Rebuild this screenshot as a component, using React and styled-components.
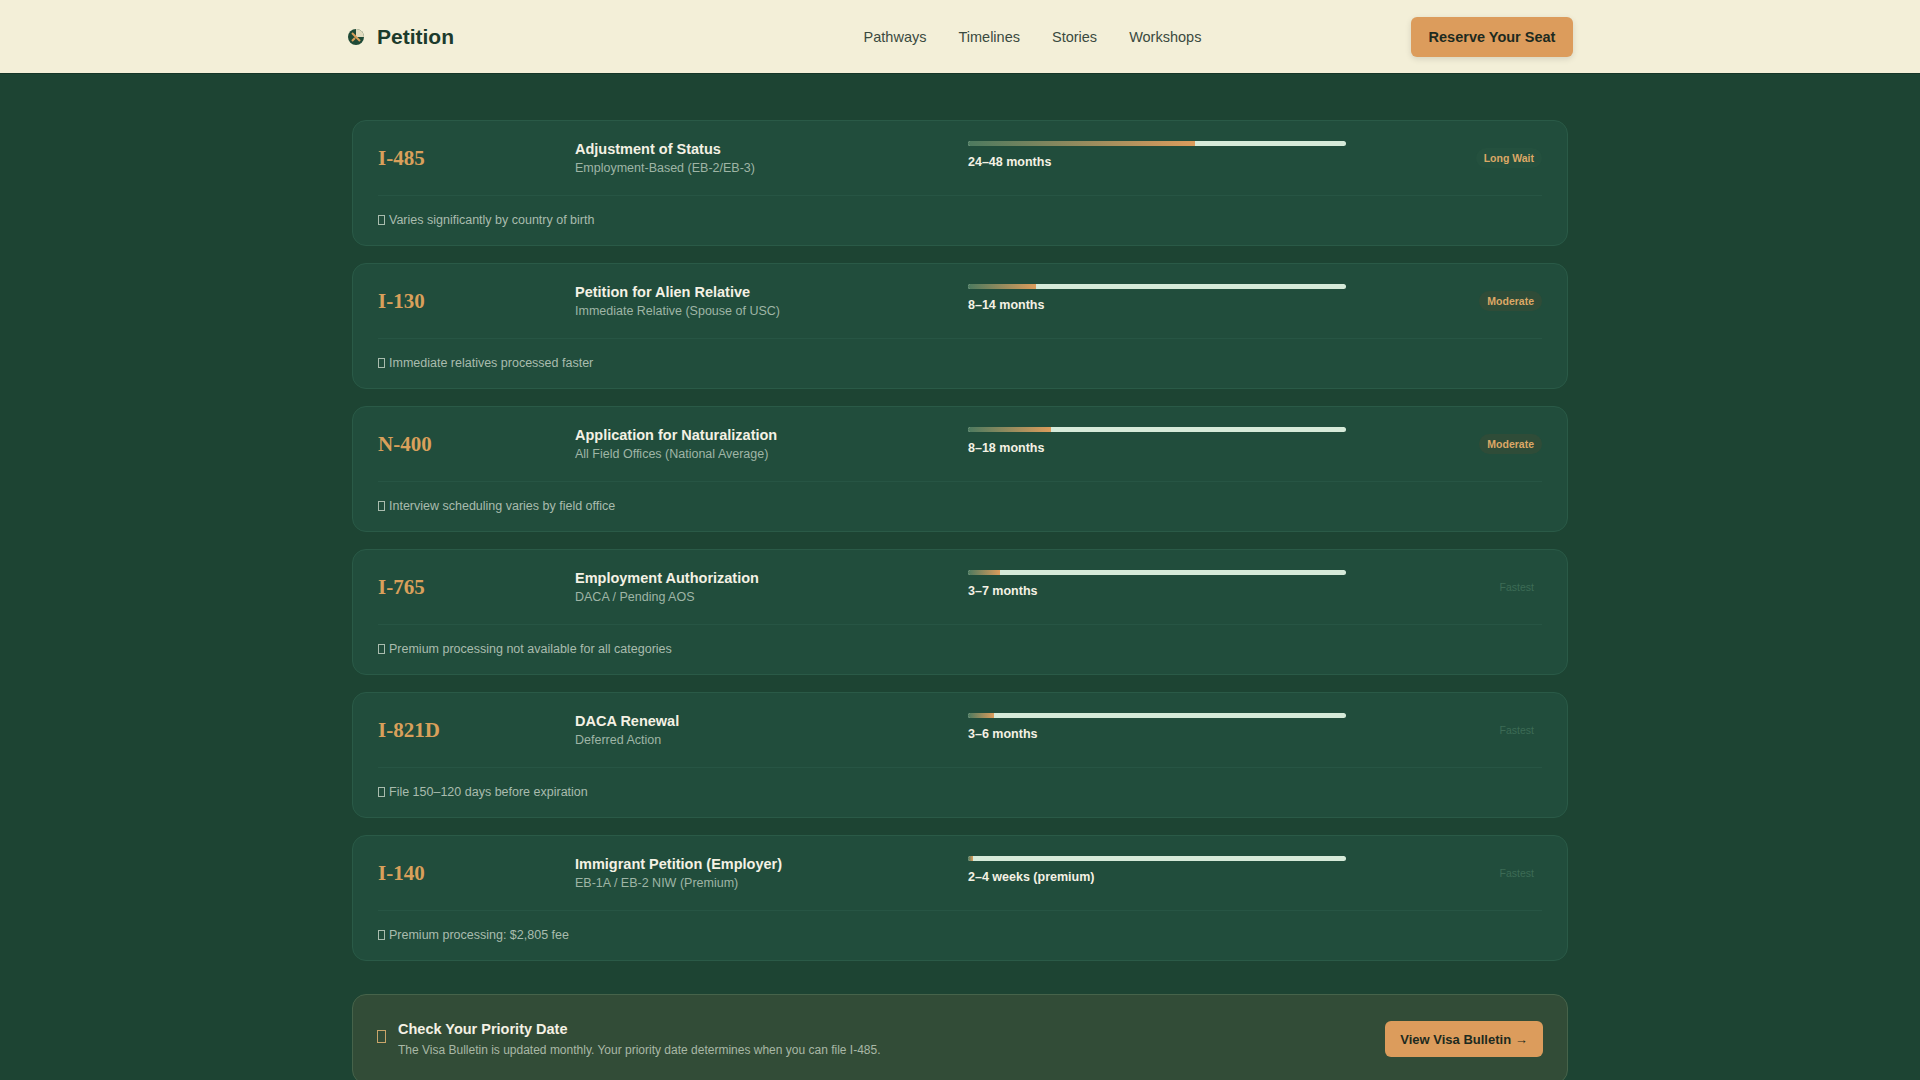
import React from "react";
import styled, { createGlobalStyle } from "styled-components";

const Global = createGlobalStyle`
  body { margin: 0; background: #1d4433; font-family: "Liberation Sans", Arial, sans-serif; }
`;

const Header = styled.header`
  height: 73px; background: #f3efd8; border-bottom: 1px solid #163628;
  display: flex; justify-content: center;
`;
const HeaderInner = styled.div`
  width: 1226px; display: flex; align-items: center; justify-content: space-between;
`;
const Brand = styled.div`
  display: flex; align-items: center; gap: 12px; font-size: 21px; font-weight: 700; color: #1c3b2c;
`;
const Nav = styled.nav`
  display: flex; gap: 32px; margin-left: 200px; font-size: 14.5px; color: #3a4a40;
`;
const CTA = styled.button`
  background: #dc9c5c; color: #1d2a20; border: 0; border-radius: 6px;
  font: 700 14.5px "Liberation Sans", Arial, sans-serif; width: 162px; height: 40px;
  box-shadow: 0 2px 6px rgba(0,0,0,.12);
`;
const Main = styled.main`
  width: 1216px; margin: 0 auto; padding: 46px 0 0; display: flex; flex-direction: column; gap: 17px;
`;
const Card = styled.div`
  background: #214d3c; border: 1px solid #2a5a47; border-radius: 14px; padding: 0 25px;
  height: 126px; box-sizing: border-box; display: flex; flex-direction: column;
`;
const Row = styled.div`
  display: grid; grid-template-columns: 197px 393px 378px 1fr; align-items: center;
  height: 74px; border-bottom: 1px solid #275544;
`;
const Code = styled.div`
  font: 700 21px "Liberation Serif", "Times New Roman", serif; color: #d9a05b;
`;
const Title = styled.div` font-size: 14.5px; font-weight: 700; color: #f4f1e4; `;
const Sub = styled.div` font-size: 12.5px; color: #9fb5a6; margin-top: 4px; `;
const Track = styled.div`
  height: 5px; border-radius: 3px; background: #d6ead9; overflow: hidden; margin-top: -6px;
`;
const Fill = styled.div`
  height: 100%; background: linear-gradient(90deg, #4d7a5f, #dc9c5c);
`;
const Months = styled.div` font-size: 12.5px; font-weight: 700; color: #f4f1e4; margin-top: 9px; `;
const Badge = styled.span`
  justify-self: end; font-size: 10.5px; font-weight: 700; padding: 4px 8px; border-radius: 10px;
  color: ${p => p.$fast ? "#3c6b55" : "#dca866"};
  background: ${p => p.$fast ? "transparent" : p.$long ? "#24503e" : "#2f4c38"};
  font-weight: ${p => p.$fast ? 400 : 700};
`;
const Note = styled.div`
  display: flex; align-items: center; gap: 4px; height: 48px; font-size: 12.5px; color: #a9bcae;
`;
const Tofu = styled.span`
  width: 5px; height: 8px; border: 1px solid #a9bcae; display: inline-block;
`;
const Bulletin = styled.div`
  margin-top: 16px; background: #324c37; border: 1px solid #46634a; border-radius: 14px;
  height: 90px; box-sizing: border-box; padding: 0 24px; display: flex; align-items: center; gap: 12px;
`;
const BText = styled.div` flex: 1; `;
const BTitle = styled.div` font-size: 14.5px; font-weight: 700; color: #f4f1e4; `;
const BSub = styled.div` font-size: 12px; color: #a9b8a6; margin-top: 6px; `;
const BBtn = styled.button`
  background: #dc9c5c; color: #1d2a20; border: 0; border-radius: 6px; width: 158px; height: 36px;
  font: 700 13px "Liberation Sans", Arial, sans-serif;
`;
const BIcon = styled.span`
  width: 7px; height: 11px; border: 1px solid #c9a56a; display: inline-block; margin-top: -6px;
`;

const rows = [
  ["I-485", "Adjustment of Status", "Employment-Based (EB-2/EB-3)", 60, "24–48 months", "Long Wait", "Varies significantly by country of birth"],
  ["I-130", "Petition for Alien Relative", "Immediate Relative (Spouse of USC)", 18, "8–14 months", "Moderate", "Immediate relatives processed faster"],
  ["N-400", "Application for Naturalization", "All Field Offices (National Average)", 22, "8–18 months", "Moderate", "Interview scheduling varies by field office"],
  ["I-765", "Employment Authorization", "DACA / Pending AOS", 8.5, "3–7 months", "Fastest", "Premium processing not available for all categories"],
  ["I-821D", "DACA Renewal", "Deferred Action", 7, "3–6 months", "Fastest", "File 150–120 days before expiration"],
  ["I-140", "Immigrant Petition (Employer)", "EB-1A / EB-2 NIW (Premium)", 1.2, "2–4 weeks (premium)", "Fastest", "Premium processing: $2,805 fee"],
];

export default function App() {
  return (
    <>
      <Global />
      <Header>
        <HeaderInner>
          <Brand>
            <svg width="18" height="18" viewBox="0 0 18 18">
              <circle cx="9" cy="9" r="8" fill="#1f4a37" />
              <path d="M9 1a8 8 0 0 1 8 8h-8z" fill="#e2dcc0" />
              <path d="M5 5l8 8M5 13l3-3" stroke="#d9a05b" strokeWidth="2" />
            </svg>
            Petition
          </Brand>
          <Nav>
            <span>Pathways</span><span>Timelines</span><span>Stories</span><span>Workshops</span>
          </Nav>
          <CTA>Reserve Your Seat</CTA>
        </HeaderInner>
      </Header>
      <Main>
        {rows.map(r => (
          <Card key={r[0]}>
            <Row>
              <Code>{r[0]}</Code>
              <div><Title>{r[1]}</Title><Sub>{r[2]}</Sub></div>
              <div>
                <Track><Fill style={{ width: r[3] + "%" }} /></Track>
                <Months>{r[4]}</Months>
              </div>
              <Badge $fast={r[5] === "Fastest"} $long={r[5] === "Long Wait"}>{r[5]}</Badge>
            </Row>
            <Note><Tofu />{r[6]}</Note>
          </Card>
        ))}
        <Bulletin>
          <BIcon />
          <BText>
            <BTitle>Check Your Priority Date</BTitle>
            <BSub>The Visa Bulletin is updated monthly. Your priority date determines when you can file I-485.</BSub>
          </BText>
          <BBtn>View Visa Bulletin →</BBtn>
        </Bulletin>
      </Main>
    </>
  );
}
